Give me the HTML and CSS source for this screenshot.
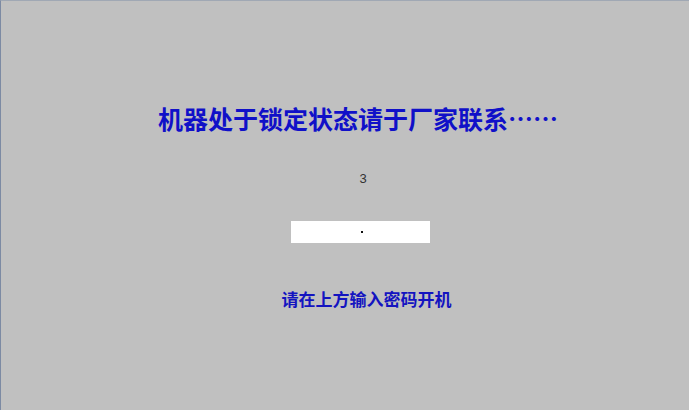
FILE: index.html
```html
<!DOCTYPE html>
<html>
<head>
<meta charset="utf-8">
<link rel="stylesheet" href="styles.css">
</head>
<body>
<div class="screen">
  <h1 class="title">机器处于锁定状态请于厂家联系……</h1>
  <div class="count">3</div>
  <div class="pwd"><span class="dot"></span></div>
  <div class="hint">请在上方输入密码开机</div>
</div>
</body>
</html>
```
FILE: styles.css
```css
html, body {
  margin: 0;
  padding: 0;
  background: #c0c0c0;
}
.screen {
  box-sizing: border-box;
  width: 689px;
  height: 410px;
  border-left: 1px solid #7c8aa3;
  border-top: 1px solid #a0a8b4;
  display: flex;
  flex-direction: column;
  align-items: center;
  padding-left: 30px;
  padding-top: 98px;
}
.title {
  margin: 0 4px 0 0;
  font-family: "Noto Sans CJK SC", sans-serif;
  font-weight: bold;
  font-size: 25px;
  line-height: 38px;
  color: #1010c8;
  white-space: nowrap;
}
.count {
  margin-top: 34px;
  margin-left: 6px;
  font-family: "Liberation Sans", sans-serif;
  font-size: 13px;
  line-height: 16px;
  color: #333333;
}
.pwd {
  box-sizing: border-box;
  margin-top: 34px;
  width: 139px;
  height: 22px;
  padding-left: 4px;
  background: #ffffff;
  display: flex;
  align-items: center;
  justify-content: center;
}
.dot {
  width: 2px;
  height: 2px;
  background: #111;
}
.hint {
  margin-top: 44px;
  margin-left: 13px;
  font-family: "Noto Sans CJK SC", sans-serif;
  font-weight: bold;
  font-size: 17px;
  line-height: 24px;
  color: #1414c0;
  white-space: nowrap;
}
```
